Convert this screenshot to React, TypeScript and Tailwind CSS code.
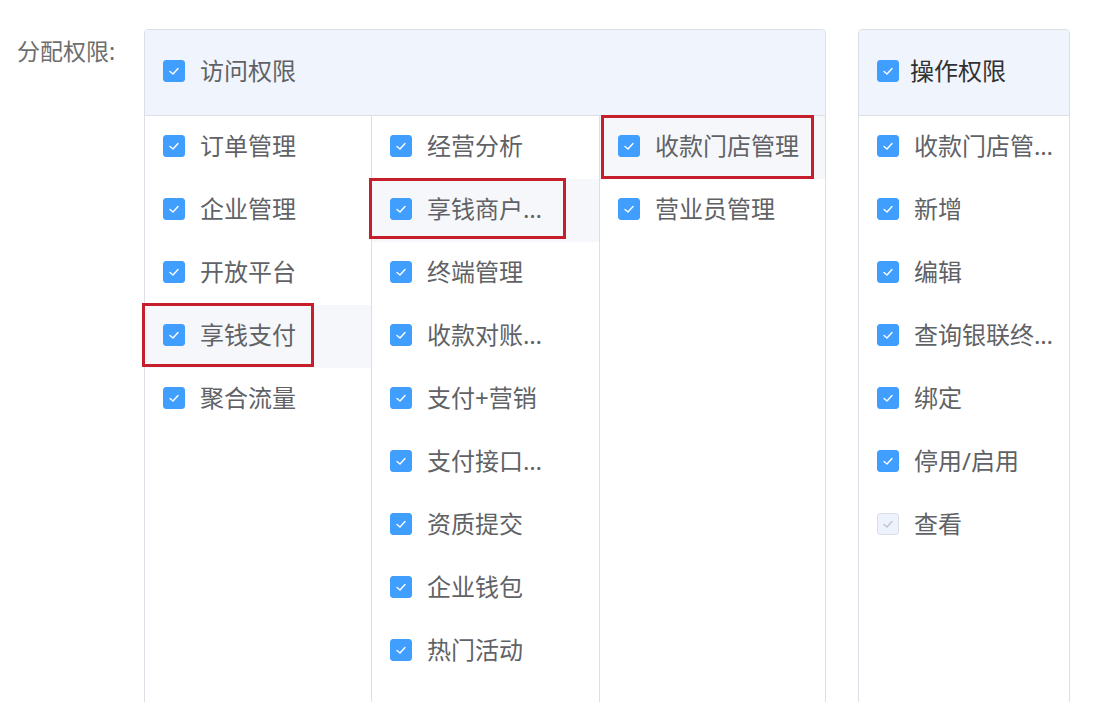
import React from "react";

type Item = { label: string; hl?: boolean; box?: string; disabled?: boolean };

function Check({ disabled }: { disabled?: boolean }) {
  return (
    <span
      className={`flex h-[22px] w-[22px] shrink-0 items-center justify-center rounded-[3px] border ${
        disabled ? "border-[#dcdfe6] bg-[#edf2fc]" : "border-[#409eff] bg-[#409eff]"
      }`}
    >
      <svg width="14" height="14" viewBox="0 0 14 14" fill="none">
        <polyline
          points="3,7.5 6,10 11,4.5"
          stroke={disabled ? "#c0c4cc" : "#ffffff"}
          strokeWidth="1.4"
          strokeLinecap="round"
          strokeLinejoin="round"
        />
      </svg>
    </span>
  );
}

function Row({ item, maxW }: { item: Item; maxW: string }) {
  return (
    <div className={`relative flex h-[63px] items-center gap-[15px] pb-[4px] pl-[18px] ${item.hl ? "bg-[#f5f7fa]" : ""}`}>
      <Check disabled={item.disabled} />
      <span className={`min-w-0 truncate text-[24px] leading-[30px] text-[#606266] ${maxW}`}>{item.label}</span>
      {item.box && <div className={`pointer-events-none absolute border-[3px] border-[#c61f2b] ${item.box}`} />}
    </div>
  );
}

const col1: Item[] = [
  { label: "订单管理" },
  { label: "企业管理" },
  { label: "开放平台" },
  { label: "享钱支付", hl: true, box: "left-[-3px] top-[-2px] h-[64px] w-[172px]" },
  { label: "聚合流量" },
];

const col2: Item[] = [
  { label: "经营分析" },
  { label: "享钱商户管理", hl: true, box: "left-[-3px] top-[-1px] h-[61px] w-[197px]" },
  { label: "终端管理" },
  { label: "收款对账管理" },
  { label: "支付+营销" },
  { label: "支付接口管理" },
  { label: "资质提交" },
  { label: "企业钱包" },
  { label: "热门活动" },
];

const col3: Item[] = [
  { label: "收款门店管理", hl: true, box: "left-[1px] top-[-1px] h-[64px] w-[213px]" },
  { label: "营业员管理" },
];

const ops: Item[] = [
  { label: "收款门店管理" },
  { label: "新增" },
  { label: "编辑" },
  { label: "查询银联终端" },
  { label: "绑定" },
  { label: "停用/启用" },
  { label: "查看", disabled: true },
];

export default function App() {
  return (
    <div className="flex h-[702px] w-[1107px] items-start overflow-hidden bg-white font-['Noto_Sans','Noto_Sans_CJK_SC',sans-serif]">
      <div className="w-[144px] shrink-0 pl-[17px] pt-[35px] text-[23px] leading-[32px] text-[#6e6e6e]">分配权限:</div>

      {/* 访问权限 */}
      <div className="mt-[29px] h-[700px] w-[682px] shrink-0 rounded-t-[4px] border border-[#dcdfe6]">
        <div className="flex h-[86px] items-center gap-[15px] rounded-t-[4px] border-b border-[#dcdfe6] bg-[#f0f4fc] pb-[4px] pl-[18px]">
          <Check />
          <span className="text-[24px] leading-[30px] text-[#606266]">访问权限</span>
        </div>
        <div className="grid h-full grid-cols-[226px_228px_226px]">
          <div>
            {col1.map((it) => (
              <Row key={it.label} item={it} maxW="max-w-[128px]" />
            ))}
          </div>
          <div className="border-l border-[#dcdfe6]">
            {col2.map((it) => (
              <Row key={it.label} item={it} maxW="max-w-[128px]" />
            ))}
          </div>
          <div className="border-l border-[#dcdfe6]">
            {col3.map((it) => (
              <Row key={it.label} item={it} maxW="max-w-[170px]" />
            ))}
          </div>
        </div>
      </div>

      {/* 操作权限 */}
      <div className="ml-[32px] mt-[29px] h-[700px] w-[212px] shrink-0 rounded-t-[4px] border border-[#dcdfe6]">
        <div className="flex h-[86px] items-center gap-[11px] rounded-t-[4px] border-b border-[#dcdfe6] bg-[#f0f4fc] pb-[4px] pl-[18px]">
          <Check />
          <span className="text-[24px] leading-[30px] text-[#303133]">操作权限</span>
        </div>
        <div>
          {ops.map((it) => (
            <Row key={it.label} item={it} maxW="max-w-[141px]" />
          ))}
        </div>
      </div>
    </div>
  );
}
